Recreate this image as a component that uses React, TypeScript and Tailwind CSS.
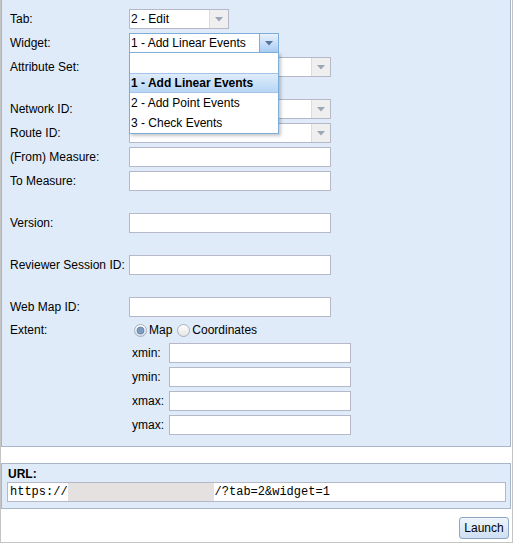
import type { ReactNode } from "react";

// Fake ExtJS-style launcher form: a light blue field panel, a URL panel, and a Launch button.

function Arrow({ dark }: { dark?: boolean }) {
  return (
    <svg width="8" height="5" viewBox="0 0 8 5">
      <polygon points="0,0 8,0 4,4.5" fill={dark ? "#55759e" : "#99a7b9"} />
    </svg>
  );
}

function Select({
  width,
  value,
  focused,
  children,
}: {
  width: string;
  value?: string;
  focused?: boolean;
  children?: ReactNode;
}) {
  return (
    <div
      className={`relative flex h-[20px] bg-white border ${width} ${
        focused ? "border-[#7eadd9]" : "border-[#b5b8c8]"
      }`}
    >
      <div className="flex-1 pl-[1px] leading-[18px] whitespace-nowrap overflow-hidden">{value}</div>
      {focused ? (
        <div className="w-[19px] border-l border-[#7eadd9] bg-gradient-to-b from-[#e8f2fd] to-[#a9cdf3] flex items-center justify-center">
          <Arrow dark />
        </div>
      ) : (
        <div className="w-[19px] border-l border-[#d9dce4] bg-[#efefef] flex items-center justify-center">
          <Arrow />
        </div>
      )}
      {children}
    </div>
  );
}

function Input({ width = "w-[202px]" }: { width?: string }) {
  return <div className={`h-[20px] bg-white border border-[#b5b8c8] ${width}`} />;
}

function Row({ label, children }: { label: string; children: ReactNode }) {
  return (
    <div className="flex items-center h-[20px]">
      <div className="w-[119px] shrink-0 whitespace-nowrap">{label}</div>
      {children}
    </div>
  );
}

function Radio({ checked }: { checked?: boolean }) {
  return (
    <svg width="13" height="13" viewBox="0 0 13 13">
      <defs>
        <linearGradient id={checked ? "rg1" : "rg2"} x1="0" y1="0" x2="0" y2="1">
          <stop offset="0" stopColor="#ffffff" />
          <stop offset="1" stopColor={checked ? "#d3dde9" : "#e4e4e4"} />
        </linearGradient>
      </defs>
      <circle cx="6.5" cy="6.5" r="6" fill={`url(#${checked ? "rg1" : "rg2"})`} stroke="#a6afbb" />
      {checked && <circle cx="6.5" cy="6.5" r="3.5" fill="#7d9cc0" stroke="#5f7fa6" strokeWidth="0.8" />}
    </svg>
  );
}

const widgetOptions = ["", "1 - Add Linear Events", "2 - Add Point Events", "3 - Check Events"];

export default function App() {
  return (
    <div className="w-[513px] h-[543px] bg-white border-l border-r border-b border-[#c4c4c4] font-['Liberation_Sans',Arial,sans-serif] text-[12px] text-black flex flex-col">
      {/* Field panel */}
      <div className="mr-[1px] border-l border-r border-b border-[#a8b6c8] bg-[#dfebf8] pt-[9px] pb-[11px] pl-[8px] flex flex-col gap-[4px]">
        <Row label="Tab:">
          <Select width="w-[100px]" value="2 - Edit" />
        </Row>
        <div className="relative z-10">
          <Row label="Widget:">
            <Select width="w-[150px]" value="1 - Add Linear Events" focused>
              {/* open dropdown list */}
              <div className="absolute left-[-1px] top-[18px] w-[150px] bg-white border border-[#7eadd9] shadow-[2px_2px_3px_rgba(0,0,0,0.22)]">
                {widgetOptions.map((o, i) =>
                  i === 1 ? (
                    <div
                      key={i}
                      className="h-[20px] leading-[18px] pl-[1px] font-bold border-y border-[#a3c4e8] bg-gradient-to-b from-[#dfecfa] to-[#b7d6f6] whitespace-nowrap"
                    >
                      {o}
                    </div>
                  ) : (
                    <div key={i} className="h-[20px] leading-[20px] pl-[1px] whitespace-nowrap">
                      {o}
                    </div>
                  )
                )}
              </div>
            </Select>
          </Row>
        </div>
        <Row label="Attribute Set:">
          <Select width="w-[202px]" />
        </Row>
        <div className="h-[14px]" />
        <Row label="Network ID:">
          <Select width="w-[202px]" />
        </Row>
        <Row label="Route ID:">
          <Select width="w-[202px]" />
        </Row>
        <Row label="(From) Measure:">
          <Input />
        </Row>
        <Row label="To Measure:">
          <Input />
        </Row>
        <div className="h-[14px]" />
        <Row label="Version:">
          <Input />
        </Row>
        <div className="h-[14px]" />
        <Row label="Reviewer Session ID:">
          <Input />
        </Row>
        <div className="h-[14px]" />
        <Row label="Web Map ID:">
          <Input />
        </Row>
        <div className="flex items-center h-[18px]">
          <div className="w-[119px] shrink-0">Extent:</div>
          <div className="flex items-center pl-[5px]">
            <Radio checked />
            <span className="ml-[2px]">Map</span>
            <span className="ml-[5px] flex">
              <Radio />
            </span>
            <span className="ml-[2px]">Coordinates</span>
          </div>
        </div>
        {["xmin:", "ymin:", "xmax:", "ymax:"].map((l) => (
          <div key={l} className="flex items-center h-[20px] pl-[122px]">
            <div className="w-[37px] shrink-0">{l}</div>
            <Input width="w-[182px]" />
          </div>
        ))}
      </div>

      {/* URL panel */}
      <div className="mt-[16px] mr-[1px] border border-[#a8b6c8] bg-[#dfebf8] pt-[3px] pb-[6px] pl-[5px] pr-[4px]">
        <div className="pl-[1px] h-[15px] leading-[14px] font-bold">URL:</div>
        <div className="h-[20px] bg-white border border-[#b5b8c8] flex items-center font-['Liberation_Mono','Courier_New',monospace] text-[12px] whitespace-nowrap">
          <span className="pl-[2px]">https://</span>
          <span className="w-[146px] h-[18px] bg-[#e6e1e1]" />
          <span className="pl-[1px]">/?tab=2&amp;widget=1</span>
        </div>
      </div>

      <div className="flex justify-end mt-[8px] mr-[3px]">
        <button className="h-[22px] w-[50px] rounded-[3px] border border-[#8fa6c4] bg-gradient-to-b from-[#eef5fd] to-[#cddff3] text-[12px] leading-[20px] text-black">
          Launch
        </button>
      </div>
    </div>
  );
}
